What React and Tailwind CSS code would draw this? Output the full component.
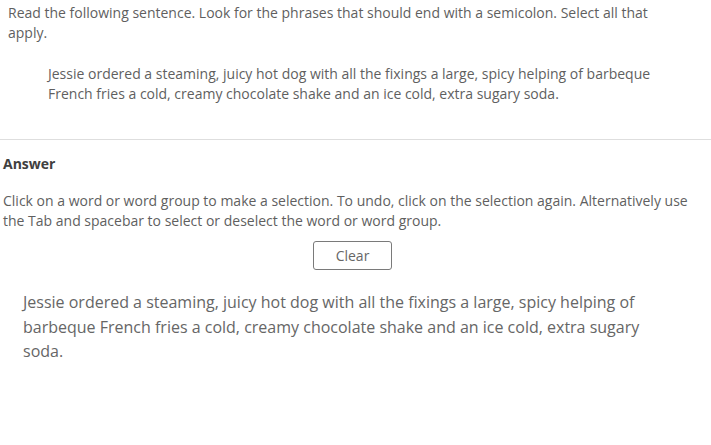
import React from 'react';

const App = () => {
  return (
    <div className="w-[711px] h-[445px] bg-white text-[#5f5f5f] font-['Open_Sans',sans-serif] overflow-hidden">
      <div className="pl-2 pr-[45px] pt-[3px] text-[14px] leading-[20px]">
        <p>
          Read the following sentence. Look for the phrases that should end with a semicolon. Select all that apply.
        </p>
        <p className="mt-[21px] ml-10">
          Jessie ordered a steaming, juicy hot dog with all the fixings a large, spicy helping of barbeque French fries a cold, creamy chocolate shake and an ice cold, extra sugary soda.
        </p>
      </div>

      <div className="mt-[35px] border-t border-[#dedede]" />

      <div className="px-[3px] pt-[14px] text-[14px] leading-[20px]">
        <h3 className="font-bold text-[#404040]">Answer</h3>
        <p className="mt-[17px] pr-5">
          Click on a word or word group to make a selection. To undo, click on the selection again. Alternatively use the Tab and spacebar to select or deselect the word or word group.
        </p>
        <div className="flex justify-center mt-[10px] pr-[6px]">
          <button className="w-[79px] h-[29px] rounded-[3px] border border-[#7a7a7a] bg-white text-[14px] text-[#666666]">
            Clear
          </button>
        </div>
        <p className="mt-[20px] ml-5 pr-[30px] text-[16px] leading-[24.5px] text-[#666666]">
          Jessie ordered a steaming, juicy hot dog with all the fixings a large, spicy helping of barbeque French fries a cold, creamy chocolate shake and an ice cold, extra sugary soda.
        </p>
      </div>
    </div>
  );
};

export default App;
